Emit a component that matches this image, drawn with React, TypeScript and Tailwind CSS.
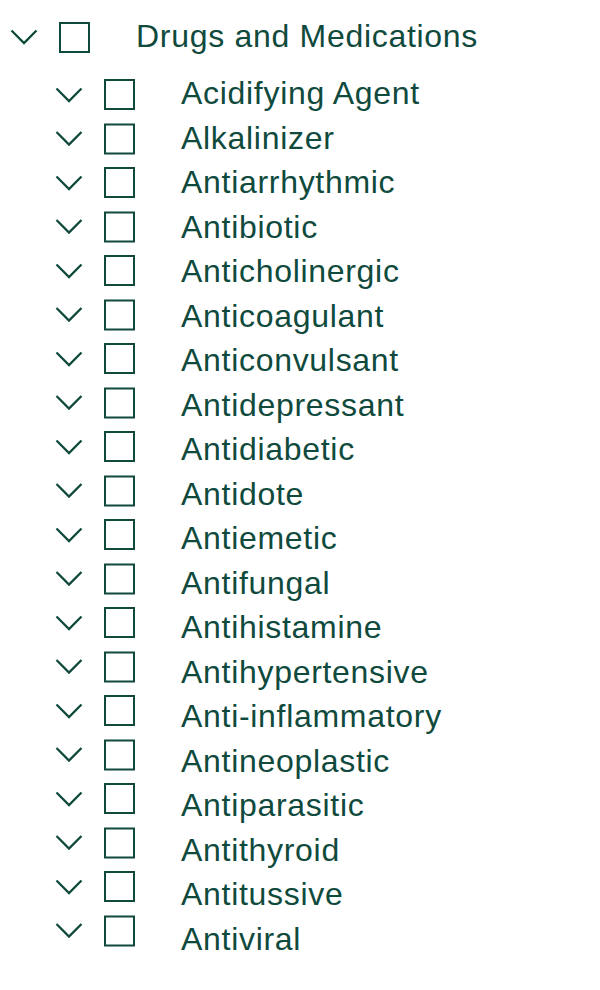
import React from "react";

const items = [
  "Acidifying Agent",
  "Alkalinizer",
  "Antiarrhythmic",
  "Antibiotic",
  "Anticholinergic",
  "Anticoagulant",
  "Anticonvulsant",
  "Antidepressant",
  "Antidiabetic",
  "Antidote",
  "Antiemetic",
  "Antifungal",
  "Antihistamine",
  "Antihypertensive",
  "Anti-inflammatory",
  "Antineoplastic",
  "Antiparasitic",
  "Antithyroid",
  "Antitussive",
  "Antiviral",
];

function Chevron() {
  return (
    <svg width="28" height="16" viewBox="0 0 28 16" className="shrink-0">
      <path d="M1.5 1.5 L14 14 L26.5 1.5" fill="none" stroke="#0f4a3d" strokeWidth="2.3" />
    </svg>
  );
}

function Row({ label, shift = 0 }: { label: string; shift?: number }) {
  return (
    <div className="flex items-center h-[44.5px]">
      <div className="flex items-center" style={{ transform: `translateY(${shift}px)` }}>
        <Chevron />
        <div className="ml-[21px] w-[31px] h-[31px] border-[2.5px] border-[#0f4a3d] shrink-0" />
      </div>
      <span className="ml-[46px] -mt-[3px] text-[32px] tracking-[0.7px] leading-none text-[#0f4a3d] whitespace-nowrap">
        {label}
      </span>
    </div>
  );
}

export default function App() {
  return (
    <div
      className="w-[600px] h-[990px] bg-white pl-[10px] pt-[15px]"
      style={{ fontFamily: '"Liberation Sans", Arial, sans-serif' }}
    >
      <Row label="Drugs and Medications" />
      <div className="pl-[45px] pt-[13px]">
        {items.map((it, i) => (
          <Row key={it} label={it} shift={-0.5 * i} />
        ))}
      </div>
    </div>
  );
}
